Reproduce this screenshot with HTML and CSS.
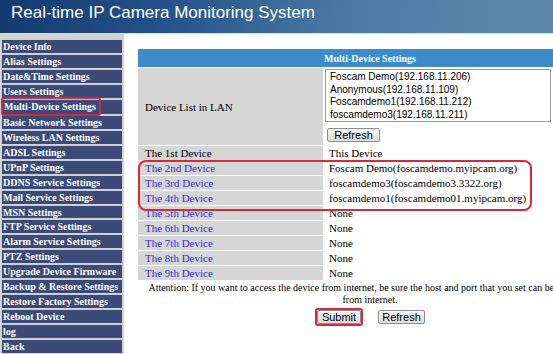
FILE: index.html
```html
<!DOCTYPE html>
<html lang="en">
<head>
  <meta charset="UTF-8" />
  <title>Real-time IP Camera Monitoring System</title>
  <link rel="stylesheet" href="styles.css">
</head>
<body>
  <div class="header">
    <h1>Real-time IP Camera Monitoring System</h1>
  </div>
  <div class="layout">
    <div class="sidebar">
      <a href="#">Device Info</a>
      <a href="#">Alias Settings</a>
      <a href="#">Date&amp;Time Settings</a>
      <a href="#">Users Settings</a>
      <a href="#" class="current"><span class="mark">Multi-Device Settings</span></a>
      <a href="#">Basic Network Settings</a>
      <a href="#">Wireless LAN Settings</a>
      <a href="#">ADSL Settings</a>
      <a href="#">UPnP Settings</a>
      <a href="#">DDNS Service Settings</a>
      <a href="#">Mail Service Settings</a>
      <a href="#">MSN Settings</a>
      <a href="#">FTP Service Settings</a>
      <a href="#">Alarm Service Settings</a>
      <a href="#">PTZ Settings</a>
      <a href="#">Upgrade Device Firmware</a>
      <a href="#">Backup &amp; Restore Settings</a>
      <a href="#">Restore Factory Settings</a>
      <a href="#">Reboot Device</a>
      <a href="#">log</a>
      <a href="#">Back</a>
    </div>
    <div class="main">
      <div class="panel">
        <table class="settings">
          <tr><th colspan="2">Multi-Device Settings</th></tr>
          <tr class="lan">
            <td class="label">Device List in LAN</td>
            <td class="value">
              <div class="listbox">
                <div>Foscam Demo(192.168.11.206)</div>
                <div>Anonymous(192.168.11.109)</div>
                <div>Foscamdemo1(192.168.11.212)</div>
                <div>foscamdemo3(192.168.11.211)</div>
              </div>
              <button class="btn small">Refresh</button>
            </td>
          </tr>
          <tr><td class="label">The 1st Device</td><td class="value">This Device</td></tr>
          <tr><td class="label"><a href="#">The 2nd Device</a></td><td class="value">Foscam Demo(foscamdemo.myipcam.org)</td></tr>
          <tr><td class="label"><a href="#">The 3rd Device</a></td><td class="value">foscamdemo3(foscamdemo3.3322.org)</td></tr>
          <tr><td class="label"><a href="#">The 4th Device</a></td><td class="value">foscamdemo1(foscamdemo01.myipcam.org)</td></tr>
          <tr><td class="label"><a href="#">The 5th Device</a></td><td class="value">None</td></tr>
          <tr><td class="label"><a href="#">The 6th Device</a></td><td class="value">None</td></tr>
          <tr><td class="label"><a href="#">The 7th Device</a></td><td class="value">None</td></tr>
          <tr><td class="label"><a href="#">The 8th Device</a></td><td class="value">None</td></tr>
          <tr><td class="label"><a href="#">The 9th Device</a></td><td class="value">None</td></tr>
        </table>
        <div class="row-mark"></div>
        <p class="attention">Attention: If you want to access the device from internet, be sure the host and port that you set can be accessed from internet.</p>
        <div class="actions">
          <span class="mark-btn"><button class="btn">Submit</button></span>
          <button class="btn">Refresh</button>
        </div>
      </div>
    </div>
  </div>
</body>
</html>
```

FILE: styles.css
```css
html, body {
  margin: 0;
  padding: 0;
  overflow: hidden;
}
body {
  width: 553px;
  height: 354px;
  background: #ffffff;
  font-family: 'Liberation Serif', 'Times New Roman', serif;
}
.header {
  height: 33px;
  background: linear-gradient(100deg, #143a6e 0%, #24528a 30%, #4a7aa4 62%, #5d89ad 100%);
  border-bottom: 1px solid #c9e0f1;
}
.header h1 {
  margin: 0;
  padding: 2px 0 0 11px;
  font-family: 'Liberation Sans', Arial, sans-serif;
  font-weight: normal;
  font-size: 17px;
  line-height: 22px;
  color: #ffffff;
}
.layout {
  display: flex;
  height: 320px;
}
.sidebar {
  width: 120px;
  flex: none;
  background: #d3d3d3;
  padding: 5px 2px 0 2px;
  display: flex;
  flex-direction: column;
}
.sidebar a {
  display: block;
  height: 14px;
  line-height: 14px;
  margin-bottom: 1px;
  padding-left: 1px;
  background: #3b4a77;
  border-top: 1px solid #c8cedd;
  color: #ffffff;
  font-weight: bold;
  font-size: 10px;
  text-decoration: none;
  white-space: nowrap;
  overflow: hidden;
}
.sidebar a.current {
  overflow: visible;
}
.sidebar .mark {
  display: inline-block;
  margin-left: -2px;
  padding: 2px 3px 2px 1px;
  border: 2px solid #d8283a;
  border-radius: 3px;
  line-height: 11px;
  position: relative;
  top: -3px;
}
.main {
  flex: 1;
  min-width: 0;
  padding: 15px 0 0 14px;
  overflow: hidden;
}
.panel {
  width: 464px;
  position: relative;
}
.settings {
  width: 100%;
  border-collapse: separate;
  border-spacing: 0;
  font-size: 11px;
}
.settings th {
  height: 18px;
  padding: 0;
  background: #3d8bca;
  color: #ffffff;
  font-size: 10px;
  font-weight: bold;
  text-align: center;
}
.settings td {
  height: 14px;
  padding: 0 0 0 7px;
  border-top: 1px solid #ffffff;
  line-height: 14px;
  white-space: nowrap;
}
.settings td.label {
  width: 178px;
  background: #d6d6d6;
}
.settings td.value {
  padding-left: 6px;
}
.settings a {
  color: #2f2fd0;
  text-decoration: none;
}
.settings tr.lan td.value {
  padding: 1px 0 3px 2px;
}
.listbox {
  width: 226px;
  height: 53px;
  border: 1px solid #9a9a9a;
  padding: 1px 4px;
  box-sizing: border-box;
  font-family: 'Liberation Sans', Arial, sans-serif;
  font-size: 10px;
  line-height: 12.5px;
}
.btn {
  font-family: 'Liberation Sans', Arial, sans-serif;
  font-size: 11px;
  height: 14px;
  padding: 0 5px;
  line-height: 12px;
  border: 1px solid #8e8e8e;
  border-radius: 2px;
  background: linear-gradient(#f6f6f6, #dcdcdc);
  color: #000000;
}
.btn.small {
  margin: 6px 0 0 2px;
  width: 53px;
}
.row-mark {
  position: absolute;
  left: 0;
  top: 111px;
  width: 390px;
  height: 47px;
  border: 2px solid #d8283a;
  border-radius: 8px;
}
.attention {
  margin: 2px 0 0 0;
  font-size: 10px;
  line-height: 12px;
  text-align: center;
}
.actions {
  display: flex;
  justify-content: center;
  align-items: center;
  gap: 15px;
  margin-top: 2px;
}
.mark-btn {
  display: inline-flex;
  padding: 0;
  border: 2px solid #d8283a;
  border-radius: 3px;
}
.actions .btn {
  display: block;
  width: 44px;
  padding: 0;
}
.actions .btn + .btn,
.actions > .btn {
  width: 47px;
}
```
